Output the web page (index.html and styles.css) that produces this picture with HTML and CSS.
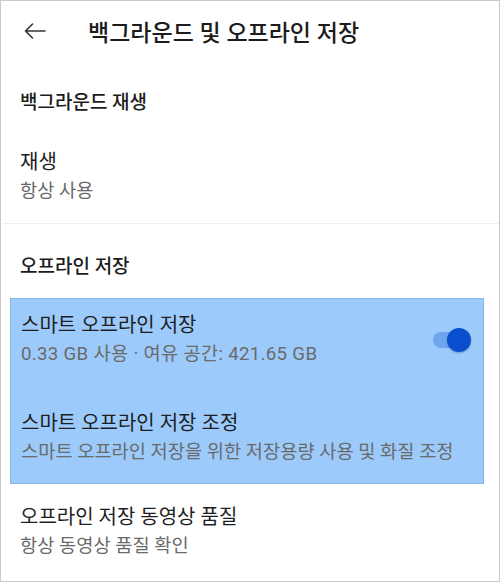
FILE: index.html
```html
<!DOCTYPE html>
<html lang="ko">
<head>
    <meta charset="UTF-8">
    <meta name="viewport" content="width=device-width, initial-scale=1.0">
    <title>백그라운드 및 오프라인 저장</title>
    <link rel="stylesheet" href="styles.css">
</head>
<body>
    <div class="screen">
        <div class="app-bar">
            <button class="back" aria-label="뒤로">
                <svg width="22" height="16" viewBox="0 0 22 16">
                    <path d="M21 8H1.5M8.5 1L1.5 8l7 7" fill="none" stroke="#333" stroke-width="1.6" stroke-linecap="round" stroke-linejoin="round"/>
                </svg>
            </button>
            <h1 class="title">백그라운드 및 오프라인 저장</h1>
        </div>

        <div class="section-head">백그라운드 재생</div>
        <div class="item">
            <div class="item-title">재생</div>
            <div class="item-sub">항상 사용</div>
        </div>

        <div class="divider"></div>

        <div class="section-head">오프라인 저장</div>
        <div class="highlight">
            <div class="item row">
                <div class="texts">
                    <div class="item-title">스마트 오프라인 저장</div>
                    <div class="item-sub storage">0.33 GB 사용 · 여유 공간: 421.65 GB</div>
                </div>
                <div class="switch on">
                    <div class="track"></div>
                    <div class="thumb"></div>
                </div>
            </div>
            <div class="item">
                <div class="item-title">스마트 오프라인 저장 조정</div>
                <div class="item-sub">스마트 오프라인 저장을 위한 저장용량 사용 및 화질 조정</div>
            </div>
        </div>

        <div class="item last">
            <div class="item-title">오프라인 저장 동영상 품질</div>
            <div class="item-sub">항상 동영상 품질 확인</div>
        </div>
    </div>
</body>
</html>
```

FILE: styles.css
```css
* {
    box-sizing: border-box;
    margin: 0;
    padding: 0;
}

body {
    font-family: Roboto, "Noto Sans CJK KR", sans-serif;
    background-color: #ffffff;
    color: #202020;
}

.screen {
    width: 500px;
    height: 582px;
    border: 1px solid #c9c9c9;
    background-color: #ffffff;
    overflow: hidden;
}

.app-bar {
    height: 59px;
    display: flex;
    align-items: center;
}

.back {
    border: none;
    background: none;
    width: 22px;
    height: 16px;
    margin-left: 23px;
    display: flex;
}

.title {
    margin-left: 42px;
    font-size: 23px;
    font-weight: 500;
    color: #1c1c1c;
}

.section-head {
    padding: 30px 19px 0;
    font-size: 19px;
    font-weight: 500;
    line-height: 26px;
    color: #1c1c1c;
}

.item {
    padding: 32px 19px 17px;
}

.item-title {
    font-size: 20px;
    line-height: 29px;
    color: #1e1e1e;
}

.item-sub {
    font-size: 18.7px;
    line-height: 29px;
    color: #6a6a6a;
}

.item-sub.storage {
    letter-spacing: 0.3px;
}

.divider {
    height: 1px;
    margin-left: 2px;
    background-color: #efefef;
}

.highlight {
    margin: 18px 15px 0 9px;
    padding: 12px 0 16px;
    background-color: #9ccafb;
    border: 1px solid #86b5ea;
}

.highlight .item {
    padding: 0 12px 0 10px;
}

.highlight .item + .item {
    margin-top: 40px;
}

.row {
    display: flex;
    align-items: center;
    justify-content: space-between;
}

.switch {
    position: relative;
    width: 38px;
    height: 24px;
}

.switch .track {
    position: absolute;
    left: 0;
    top: 4px;
    width: 34px;
    height: 16px;
    border-radius: 8px;
    background-color: #6fa5ee;
}

.switch .thumb {
    position: absolute;
    right: 0;
    top: 0;
    width: 24px;
    height: 24px;
    border-radius: 50%;
    background-color: #0a4fcf;
    box-shadow: 0 1px 2px rgba(0, 0, 0, 0.25);
}

.item.last {
    padding-top: 19px;
}
```
